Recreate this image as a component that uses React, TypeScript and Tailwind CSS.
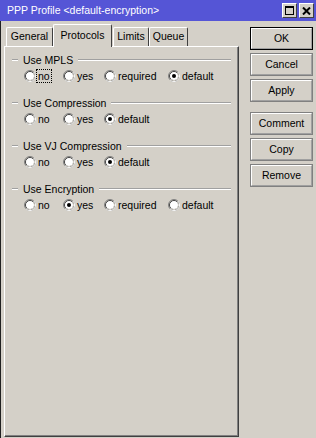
type Opt = { label: string; checked?: boolean; focus?: boolean; w?: string };

const groups: { title: string; opts: Opt[] }[] = [
  {
    title: "Use MPLS",
    opts: [
      { label: "no", focus: true, w: "w-[39px]" },
      { label: "yes", w: "w-[41px]" },
      { label: "required", w: "w-[64px]" },
      { label: "default", checked: true },
    ],
  },
  {
    title: "Use Compression",
    opts: [
      { label: "no", w: "w-[39px]" },
      { label: "yes", w: "w-[41px]" },
      { label: "default", checked: true },
    ],
  },
  {
    title: "Use VJ Compression",
    opts: [
      { label: "no", w: "w-[39px]" },
      { label: "yes", w: "w-[41px]" },
      { label: "default", checked: true },
    ],
  },
  {
    title: "Use Encryption",
    opts: [
      { label: "no", w: "w-[39px]" },
      { label: "yes", checked: true, w: "w-[41px]" },
      { label: "required", w: "w-[64px]" },
      { label: "default" },
    ],
  },
];

function Radio({ checked }: { checked?: boolean }) {
  // classic sunken radio circle
  return (
    <svg width="12" height="12" viewBox="0 0 12 12" className="shrink-0">
      <circle cx="6" cy="6" r="5.5" fill="none" stroke="#808080" />
      <path d="M9.89 2.11 A5.5 5.5 0 0 1 2.11 9.89" fill="none" stroke="#ffffff" />
      <circle cx="6" cy="6" r="4.5" fill="#ffffff" stroke="#404040" />
      <path d="M9.18 2.82 A4.5 4.5 0 0 1 2.82 9.18" fill="none" stroke="#d4d0c8" />
      <circle cx="6" cy="6" r="3.6" fill="#ffffff" />
      {checked && <circle cx="6" cy="6" r="2" fill="#000000" />}
    </svg>
  );
}

function Group({ title, opts }: { title: string; opts: Opt[] }) {
  return (
    <div className="h-[43px]">
      <div className="flex h-[14px] items-center pl-[7px] pr-[7px]">
        <div className="h-[2px] w-[6px] border-t border-b border-t-[#a0a0a0] border-b-white" />
        <span className="ml-[5px] mr-[5px] leading-[14px]">{title}</span>
        <div className="h-[2px] flex-1 border-t border-b border-t-[#a0a0a0] border-b-white" />
      </div>
      <div className="mt-[2px] flex h-[14px] items-center pl-[19px]">
        {opts.map((o) => (
          <div key={o.label} className={`flex items-center ${o.w ?? ""}`}>
            <Radio checked={o.checked} />
            <span
              className={`border px-[1px] leading-[12px] ${
                o.focus ? "border-dotted border-black" : "border-transparent"
              }`}
            >
              {o.label}
            </span>
          </div>
        ))}
      </div>
    </div>
  );
}

function Btn({ label, def }: { label: string; def?: boolean }) {
  return (
    <div className={`h-[23px] w-[63px] ${def ? "border border-black" : "border border-[#808080]"}`}>
      <div className="flex h-full w-full items-center justify-center border-t border-l border-t-white border-l-white border-r border-b border-r-[#a0a0a0] border-b-[#a0a0a0]">
        {label}
      </div>
    </div>
  );
}

function Tab({ label, w, active }: { label: string; w: string; active?: boolean }) {
  if (active) {
    return (
      <div
        className={`${w} relative z-10 -mb-px flex h-[23px] items-start justify-center rounded-t-[2px] border-t border-l border-r border-t-white border-l-white border-r-[#404040] bg-[#d4d0c8] pt-[3px]`}
      >
        {label}
      </div>
    );
  }
  return (
    <div
      className={`${w} flex h-[19px] items-center justify-center rounded-t-[2px] border-t border-l border-r border-t-white border-l-white border-r-[#404040]`}
    >
      {label}
    </div>
  );
}

export default function App() {
  return (
    <div className="flex h-[438px] w-[316px] flex-col overflow-hidden bg-[#d4d0c8] font-['Liberation_Sans',sans-serif] text-[10.5px] text-black">
      {/* title bar */}
      <div className="flex h-[21px] shrink-0 items-center bg-[#5555d6] pl-[7px] pr-[2px] text-white">
        <span className="flex-1 text-[10.5px] leading-[21px]">PPP Profile &lt;default-encryption&gt;</span>
        <div className="flex gap-[2px]">
          <div className="flex h-[15px] w-[15px] items-center justify-center border border-t-white border-l-white border-r-[#404040] border-b-[#404040] bg-[#d4d0c8]">
            <svg width="9" height="9" viewBox="0 0 9 9">
              <rect x="0.5" y="0.5" width="8" height="8" fill="none" stroke="#000" />
              <rect x="0" y="0" width="9" height="2" fill="#000" />
            </svg>
          </div>
          <div className="flex h-[15px] w-[15px] items-center justify-center border border-t-white border-l-white border-r-[#404040] border-b-[#404040] bg-[#d4d0c8]">
            <svg width="9" height="8" viewBox="0 0 9 8">
              <path d="M1 0.5 L8 7.5 M8 0.5 L1 7.5" stroke="#000" strokeWidth="2" />
            </svg>
          </div>
        </div>
      </div>

      {/* body */}
      <div className="flex flex-1 border-l border-l-[#202020]">
        <div className="ml-[3px] flex w-[235px] flex-col pt-[3px]">
          <div className="flex h-[22px] items-end pl-[2px]">
            <Tab label="General" w="w-[47px]" />
            <Tab label="Protocols" w="w-[59px]" active />
            <div className="w-[1px]" />
            <Tab label="Limits" w="w-[36px]" />
            <Tab label="Queue" w="w-[39px]" />
          </div>
          <div className="mb-[1px] flex-1 border-t border-l border-t-white border-l-white border-r border-b border-r-[#404040] border-b-[#404040] pt-[6px] shadow-[inset_-1px_-1px_#808080]">
            {groups.map((g) => (
              <Group key={g.title} title={g.title} opts={g.opts} />
            ))}
          </div>
        </div>

        <div className="ml-[11px] flex flex-col pt-[6px]">
          <div className="flex flex-col gap-[3px]">
            <Btn label="OK" def />
            <Btn label="Cancel" />
            <Btn label="Apply" />
          </div>
          <div className="mt-[10px] flex flex-col gap-[3px]">
            <Btn label="Comment" />
            <Btn label="Copy" />
            <Btn label="Remove" />
          </div>
        </div>
      </div>
    </div>
  );
}
